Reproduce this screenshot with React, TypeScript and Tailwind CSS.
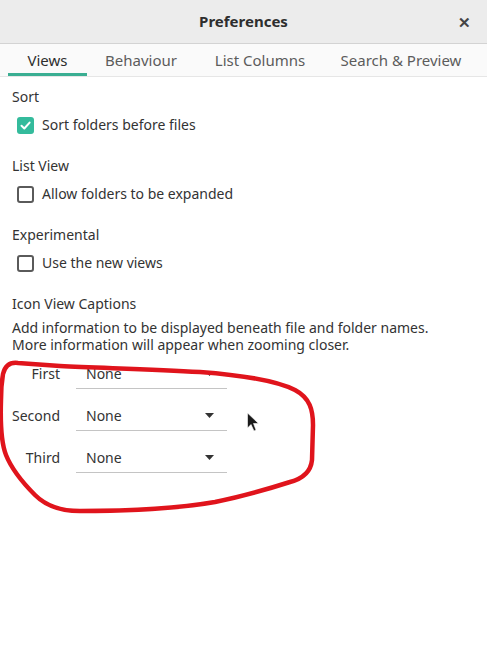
import React from "react";

function Check({ checked }: { checked?: boolean }) {
  return checked ? (
    <span className="flex h-[17px] w-[17px] items-center justify-center rounded-[3px] bg-[#34bb9c]">
      <svg width="13" height="13" viewBox="0 0 13 13">
        <path d="M2.5 6.8 L5.3 9.5 L10.6 3.6" fill="none" stroke="#fff" strokeWidth="2" strokeLinecap="round" strokeLinejoin="round" />
      </svg>
    </span>
  ) : (
    <span className="h-[17px] w-[17px] rounded-[3px] border-2 border-[#5a5a5a] bg-white" />
  );
}

function CheckRow({ label, checked }: { label: string; checked?: boolean }) {
  return (
    <div className="mt-[6px] flex h-[24px] items-center pl-[5px]">
      <Check checked={checked} />
      <span className="ml-[8px] text-[#333]">{label}</span>
    </div>
  );
}

function Combo({ label, first }: { label: string; first?: boolean }) {
  return (
    <div className={`flex h-[30px] items-center ${first ? "" : "mt-[12px]"}`}>
      <span className="w-[48px] text-right text-[#333]">{label}</span>
      <div className="ml-[16px] flex h-[30px] w-[151px] items-center justify-between border-b border-[#c4c4c4] pl-[10px] pr-[13px]">
        <span className="text-[#333]">None</span>
        <svg width="9" height="5" viewBox="0 0 9 5">
          <path d="M0 0 L9 0 L4.5 5 Z" fill="#333" />
        </svg>
      </div>
    </div>
  );
}

export default function App() {
  const tabs = [
    { t: "Views", w: "w-[79px]", active: true },
    { t: "Behaviour", w: "w-[108px]" },
    { t: "List Columns", w: "w-[130px]" },
    { t: "Search & Preview", w: "w-[152px]" },
  ];
  return (
    <div
      className="relative h-[657px] w-[487px] overflow-hidden bg-white text-[14px] leading-[20px]"
      style={{ fontFamily: '"Noto Sans", "Open Sans", sans-serif' }}
    >
      <div className="relative flex h-[44px] items-center justify-center border-b border-[#d3d3d3] bg-[#ececec] pb-[2px]">
        <span className="text-[15px] font-bold text-[#2e2e2e]">Preferences</span>
        <span className="absolute right-[16px] top-[12px] text-[15px] font-bold text-[#444]">✕</span>
      </div>
      <div className="flex h-[33px] border-b border-[#e6e6e6] bg-[#fafafa] pl-[8px]">
        {tabs.map((x) => (
          <div
            key={x.t}
            className={`${x.w} flex items-center justify-center border-b-[3px] pt-[3px] text-[15px] ${
              x.active ? "border-[#3aae92] text-[#2e2e2e]" : "border-transparent text-[#5c5c5c]"
            }`}
          >
            {x.t}
          </div>
        ))}
      </div>
      <div className="px-[12px] pt-[10px]">
        <div className="text-[#333]">Sort</div>
        <CheckRow label="Sort folders before files" checked />
        <div className="mt-[19px] text-[#333]">List View</div>
        <CheckRow label="Allow folders to be expanded" />
        <div className="mt-[19px] text-[#333]">Experimental</div>
        <CheckRow label="Use the new views" />
        <div className="mt-[19px] text-[#333]">Icon View Captions</div>
        <div className="mt-[5px] text-[#333]">
          <div className="h-[17px] leading-[17px]">Add information to be displayed beneath file and folder names.</div>
          <div className="h-[17px] leading-[17px]">More information will appear when zooming closer.</div>
        </div>
        <div className="mt-[6px]">
          <Combo label="First" first />
          <Combo label="Second" />
          <Combo label="Third" />
        </div>
      </div>

      <svg className="pointer-events-none absolute left-0 top-0" width="487" height="657" viewBox="0 0 487 657">
        <path
          d="M 3 374 C 5 366, 10 362, 18 363 L 60 366 C 100 368, 150 369, 200 372 C 240 375, 275 380, 295 390 C 310 398, 313 410, 313 425 L 312 460 C 311 470, 305 478, 290 482 C 265 490, 240 497, 215 502 C 180 508, 130 511, 80 511 C 60 511, 45 505, 35 495 C 25 485, 12 470, 6 455 C 2 445, 0 430, 1 400 C 1 388, 2 380, 3 374"
          fill="none"
          stroke="#e0141c"
          strokeWidth="4.5"
          strokeLinecap="round"
          strokeLinejoin="round"
        />
        <path d="M 247.5 413 L 247.5 428 L 251 424.5 L 254 431 L 256 430 L 253.5 423.5 L 258.5 423.5 Z" fill="#1a1a1a" stroke="#fff" strokeWidth="0.6" />
      </svg>
    </div>
  );
}
